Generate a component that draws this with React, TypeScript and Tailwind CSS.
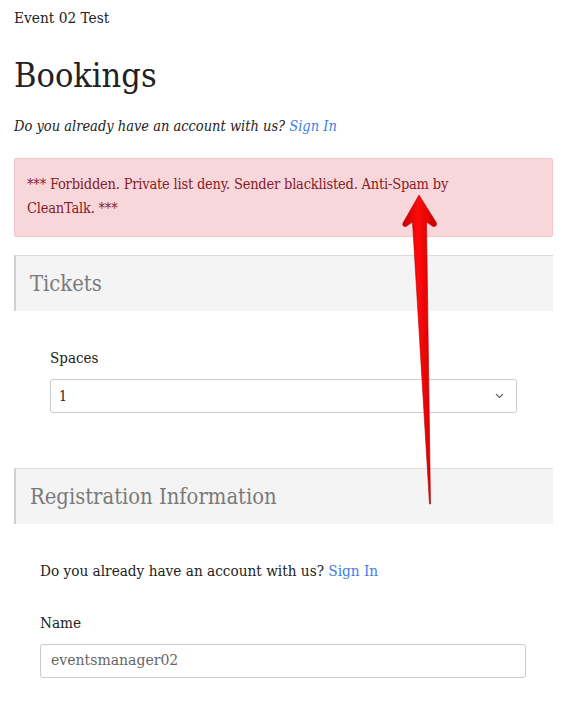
const serif = "font-['DejaVu_Serif_Condensed','DejaVu_Serif',serif]";

function SectionHeader({ title }: { title: string }) {
  return (
    <div className="h-[56px] bg-[#f4f4f4] border-t border-[#dcdcdc] border-l-2 border-l-[#cfcfcf] flex items-center pl-[14px]">
      <h3 className="text-[21.8px] text-[#7a7a7a] leading-none">{title}</h3>
    </div>
  );
}

function Chevron() {
  return (
    <svg width="9" height="6" viewBox="0 0 9 6" className="text-[#666]">
      <path d="M1 1 L4.5 4.5 L8 1" fill="none" stroke="currentColor" strokeWidth="1.2" />
    </svg>
  );
}

function Arrow() {
  return (
    <svg className="absolute left-0 top-0 pointer-events-none" width="581" height="703" viewBox="0 0 581 703">
      <defs>
        <linearGradient id="shaft" x1="0" x2="1" y1="0" y2="0">
          <stop offset="0" stopColor="#c40000" />
          <stop offset="0.45" stopColor="#ff0a0a" />
          <stop offset="1" stopColor="#c80000" />
        </linearGradient>
      </defs>
      <path
        d="M419 195 L436.5 223 Q437 227 433 226.5 L426.5 222 L430.5 504 L429.5 504 L412.5 222 L406 226.5 Q402 227 403 223 Z"
        fill="url(#shaft)"
        stroke="#b00000"
        strokeWidth="0.6"
        strokeLinejoin="round"
      />
    </svg>
  );
}

export default function App() {
  return (
    <div className={`relative w-[581px] h-[703px] bg-white overflow-hidden ${serif} text-[#222]`}>
      <div className="pl-[14px] pr-[28px]">
        <p className="pt-[8px] text-[15.3px] leading-[20px]">Event 02 Test</p>
        <h1 className="mt-[26px] text-[34px] leading-[42px] text-[#222]">Bookings</h1>
        <p className="mt-[20px] italic text-[14.5px] leading-[20px]">
          Do you already have an account with us? <a className="text-[#3f7de8]">Sign In</a>
        </p>

        <div className="mt-[22px] h-[79px] bg-[#f8d7da] border border-[#f3c4c8] rounded-[2px] px-[12px] pt-[13px] text-[14.5px] tracking-[-0.2px] leading-[24px] text-[#842029]">
          <p className="max-w-[440px]">
            *** Forbidden. Private list deny. Sender blacklisted. Anti-Spam by CleanTalk. ***
          </p>
        </div>

        <div className="mt-[18px]">
          <SectionHeader title="Tickets" />
          <div className="pl-[36px] pr-[36px] pt-[36px]">
            <label className="block text-[15px] leading-[22px]">Spaces</label>
            <div className="mt-[10px] h-[34px] border border-[#cccccc] rounded-[3px] flex items-center justify-between pl-[8px] pr-[12px]">
              <span className="text-[14px]">1</span>
              <Chevron />
            </div>
          </div>
        </div>

        <div className="mt-[55px]">
          <SectionHeader title="Registration Information" />
          <div className="pl-[26px] pr-[27px] pt-[36px]">
            <p className="text-[15.2px] leading-[22px]">
              Do you already have an account with us? <a className="text-[#3f7de8]">Sign In</a>
            </p>
            <label className="block mt-[30px] text-[15.2px] leading-[22px]">Name</label>
            <div className="mt-[10px] h-[34px] border border-[#cccccc] rounded-[3px] flex items-center pl-[10px]">
              <span className="text-[15.6px] text-[#666]">eventsmanager02</span>
            </div>
          </div>
        </div>
      </div>
      <Arrow />
    </div>
  );
}
